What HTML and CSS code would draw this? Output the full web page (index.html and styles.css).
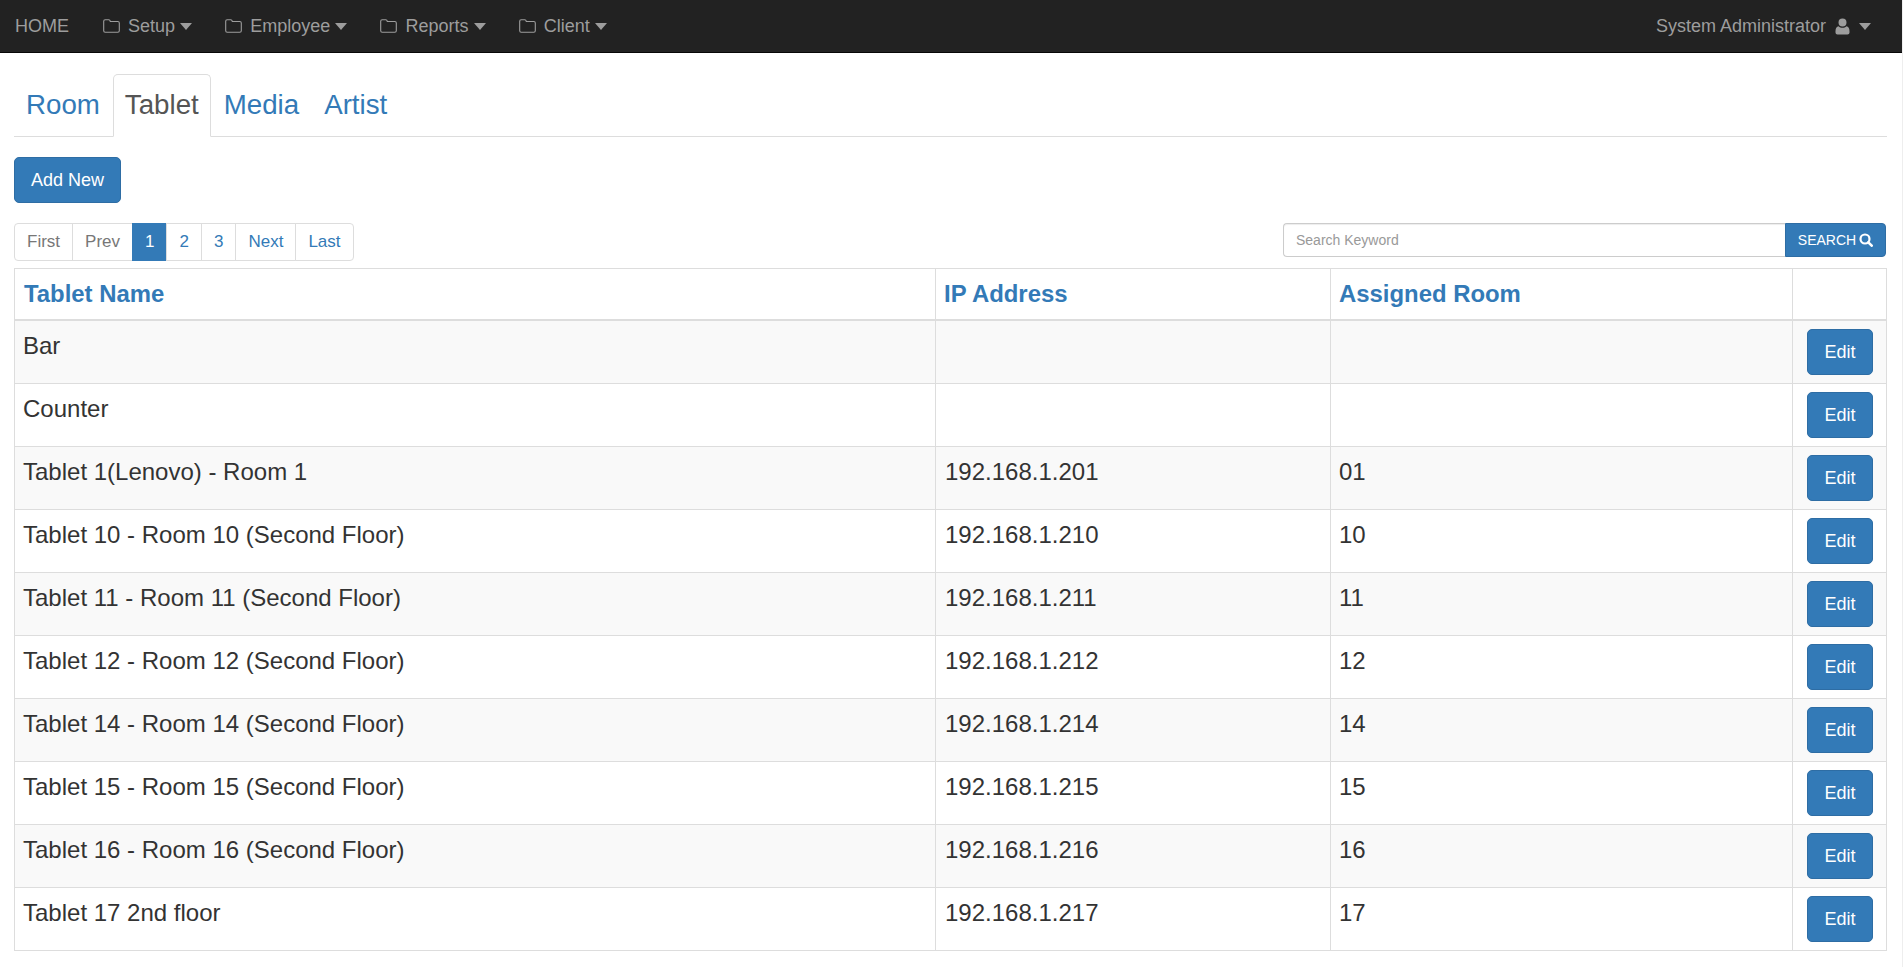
FILE: index.html
```html
<!DOCTYPE html>
<html lang="en">
<head>
  <meta charset="UTF-8" />
  <title>Tablet</title>
  <link rel="stylesheet" href="styles.css">
</head>
<body>
  <svg class="sprites" width="0" height="0">
    <symbol id="folder" viewBox="0 0 17 14">
      <path d="M2.200 .7h3.600c.8 0 1.200 .5 1.300 1.100l.2 .7h7.500c.8 0 1.500 .7 1.500 1.500v7.800c0 .8-.7 1.500-1.500 1.500H2.200c-.8 0-1.500-.7-1.500-1.500V2.200c0-.8 .7-1.500 1.500-1.500z" fill="none" stroke="currentColor" stroke-width="1.100"/>
    </symbol>
  </svg>

  <nav class="navbar">
    <a class="nav-link home" href="#">HOME</a>
    <a class="nav-link" href="#"><svg class="folder"><use href="#folder"/></svg>Setup<span class="caret"></span></a>
    <a class="nav-link" href="#"><svg class="folder"><use href="#folder"/></svg>Employee<span class="caret"></span></a>
    <a class="nav-link" href="#"><svg class="folder"><use href="#folder"/></svg>Reports<span class="caret"></span></a>
    <a class="nav-link" href="#"><svg class="folder"><use href="#folder"/></svg>Client<span class="caret"></span></a>
    <a class="nav-link user" href="#">System Administrator
      <svg class="user-icon" viewBox="0 0 15 17"><path d="M7.500 0.500a4 4 0 1 1 0 8a4 4 0 1 1 0-8zM3.600 8.200c1 1 2.400 1.500 3.900 1.500s2.900-.5 3.900-1.500c2 .2 3.100 2 3.100 5v1.300c0 1.200-.9 2-2 2H2.500c-1.100 0-2-.8-2-2v-1.300c0-3 1.100-4.800 3.100-5z" fill="currentColor"/></svg>
      <span class="caret"></span></a>
  </nav>

  <div class="container">
    <ul class="tabs">
      <li><a href="#">Room</a></li>
      <li class="active"><a href="#">Tablet</a></li>
      <li><a href="#">Media</a></li>
      <li><a href="#">Artist</a></li>
    </ul>

    <a class="btn add-new" href="#">Add New</a>

    <div class="toolbar">
      <ul class="pagination">
        <li class="muted"><a href="#">First</a></li>
        <li class="muted"><a href="#">Prev</a></li>
        <li class="current"><a href="#">1</a></li>
        <li><a href="#">2</a></li>
        <li><a href="#">3</a></li>
        <li><a href="#">Next</a></li>
        <li><a href="#">Last</a></li>
      </ul>
      <form class="search">
        <input type="text" placeholder="Search Keyword" />
        <button type="button">SEARCH
          <svg class="search-icon" viewBox="0 0 14 14"><circle cx="6" cy="6" r="4.500" fill="none" stroke="currentColor" stroke-width="2.200"/><path d="M9.300 9.300l3.400 3.400" stroke="currentColor" stroke-width="2.600" stroke-linecap="round"/></svg>
        </button>
      </form>
    </div>

    <table class="grid">
      <colgroup>
        <col class="col-name"><col class="col-ip"><col class="col-room"><col class="col-action">
      </colgroup>
      <thead>
        <tr><th><a href="#">Tablet Name</a></th><th><a href="#">IP Address</a></th><th><a href="#">Assigned Room</a></th><th></th></tr>
      </thead>
      <tbody>
        <tr><td>Bar</td><td></td><td></td><td><a class="btn" href="#">Edit</a></td></tr>
        <tr><td>Counter</td><td></td><td></td><td><a class="btn" href="#">Edit</a></td></tr>
        <tr><td>Tablet 1(Lenovo) - Room 1</td><td>192.168.1.201</td><td>01</td><td><a class="btn" href="#">Edit</a></td></tr>
        <tr><td>Tablet 10 - Room 10 (Second Floor)</td><td>192.168.1.210</td><td>10</td><td><a class="btn" href="#">Edit</a></td></tr>
        <tr><td>Tablet 11 - Room 11 (Second Floor)</td><td>192.168.1.211</td><td>11</td><td><a class="btn" href="#">Edit</a></td></tr>
        <tr><td>Tablet 12 - Room 12 (Second Floor)</td><td>192.168.1.212</td><td>12</td><td><a class="btn" href="#">Edit</a></td></tr>
        <tr><td>Tablet 14 - Room 14 (Second Floor)</td><td>192.168.1.214</td><td>14</td><td><a class="btn" href="#">Edit</a></td></tr>
        <tr><td>Tablet 15 - Room 15 (Second Floor)</td><td>192.168.1.215</td><td>15</td><td><a class="btn" href="#">Edit</a></td></tr>
        <tr><td>Tablet 16 - Room 16 (Second Floor)</td><td>192.168.1.216</td><td>16</td><td><a class="btn" href="#">Edit</a></td></tr>
        <tr><td>Tablet 17 2nd floor</td><td>192.168.1.217</td><td>17</td><td><a class="btn" href="#">Edit</a></td></tr>
      </tbody>
    </table>
  </div>
</body>
</html>
```
FILE: styles.css
```css
* {
  box-sizing: border-box;
}

html, body {
  margin: 0;
  height: 100%;
  overflow: hidden;
}

body {
  font-family: "Liberation Sans", Arial, sans-serif;
  font-size: 18px;
  color: #333;
  background-color: #fff;
  border-right: 1px solid #eee;
}

a {
  color: #337ab7;
  text-decoration: none;
}

.sprites {
  display: block;
  height: 0;
}

.navbar {
  display: flex;
  align-items: center;
  height: 53px;
  padding: 0 31px 0 15px;
  background-color: #222;
  border-bottom: 1px solid #080808;
}

.nav-link {
  display: flex;
  align-items: center;
  margin-right: 33.200px;
  font-size: 18px;
  color: #9d9d9d;
}

.home {
  margin-right: 34px;
}

.user {
  margin: 0 0 0 auto;
}

.folder {
  width: 17px;
  height: 14px;
  margin-right: 8px;
}

.user-icon {
  width: 15px;
  height: 17px;
  margin-left: 9px;
}

.caret {
  width: 0;
  height: 0;
  margin-left: 5px;
  border-top: 7px solid currentColor;
  border-left: 6px solid transparent;
  border-right: 6px solid transparent;
}

.user .caret {
  margin-left: 9px;
}

.container {
  padding: 21px 15px 0 14px;
}

.tabs {
  display: flex;
  height: 63px;
  margin: 0 0 20px;
  padding: 0;
  list-style: none;
  border-bottom: 1px solid #ddd;
}

.tabs a {
  display: block;
  height: 63px;
  padding: 0 11px;
  font-size: 27.700px;
  line-height: 59px;
  border: 1px solid transparent;
  border-radius: 5px 5px 0 0;
}

.tabs li {
  margin-right: 1px;
}

.tabs .active a {
  color: #555;
  background: #fff;
  border-color: #ddd #ddd #fff;
}

.btn {
  display: inline-block;
  height: 46px;
  padding: 0 16px;
  font-size: 18px;
  line-height: 44px;
  white-space: nowrap;
  color: #fff;
  background-color: #337ab7;
  border: 1px solid #2e6da4;
  border-radius: 5px;
}

.add-new {
  display: block;
  width: 107px;
  margin-bottom: 20px;
  text-align: center;
}

.toolbar {
  display: flex;
  justify-content: space-between;
  align-items: flex-start;
  height: 45px;
  padding-right: 1px;
}

.pagination {
  display: flex;
  margin: 0;
  padding: 0;
  list-style: none;
}

.pagination a {
  display: block;
  height: 38px;
  padding: 0 12px;
  font-size: 17px;
  line-height: 36px;
  background: #fff;
  border: 1px solid #ddd;
  margin-left: -1px;
}

.pagination li:first-child a {
  margin-left: 0;
  border-radius: 4px 0 0 4px;
}

.pagination li:last-child a {
  border-radius: 0 4px 4px 0;
}

.pagination .muted a {
  color: #777;
}

.pagination .current a {
  color: #fff;
  background-color: #337ab7;
  border-color: #337ab7;
}

.search {
  display: flex;
  width: 603px;
  height: 34px;
}

.search input {
  flex: 1;
  min-width: 0;
  padding: 0 12px;
  font-family: inherit;
  font-size: 14px;
  color: #555;
  border: 1px solid #ccc;
  border-right: 0;
  border-radius: 4px 0 0 4px;
  box-shadow: inset 0 1px 1px rgba(0,0,0,.075);
}

.search input::placeholder {
  color: #999;
}

.search button {
  display: flex;
  align-items: center;
  justify-content: center;
  gap: 3px;
  width: 101px;
  padding: 0;
  font-family: inherit;
  font-size: 14px;
  color: #fff;
  background-color: #337ab7;
  border: 1px solid #2e6da4;
  border-radius: 0 4px 4px 0;
}

.search-icon {
  width: 14px;
  height: 14px;
}

.grid {
  width: 1873px;
  table-layout: fixed;
  border-collapse: collapse;
  border: 1px solid #ddd;
}

.col-name {
  width: 921px;
}

.col-ip {
  width: 395px;
}

.col-room {
  width: 462px;
}

.grid th, .grid td {
  padding: 8px;
  text-align: left;
  vertical-align: top;
  border: 1px solid #ddd;
}

.grid th {
  height: 51px;
  font-size: 23.900px;
  line-height: 33px;
  border-bottom-width: 2px;
}

.grid th:first-child, .grid td:nth-child(2) {
  padding-left: 9px;
}

.grid td {
  height: 63px;
  font-size: 24px;
  line-height: 33px;
}

.grid tbody tr:first-child td {
  height: 64px;
}

.grid td:last-child {
  padding: 8px 0 0 14px;
}

.grid td:last-child .btn {
  display: block;
  width: 66px;
  padding: 0;
  text-align: center;
}

.grid tbody tr:nth-child(odd) {
  background-color: #f9f9f9;
}
```
